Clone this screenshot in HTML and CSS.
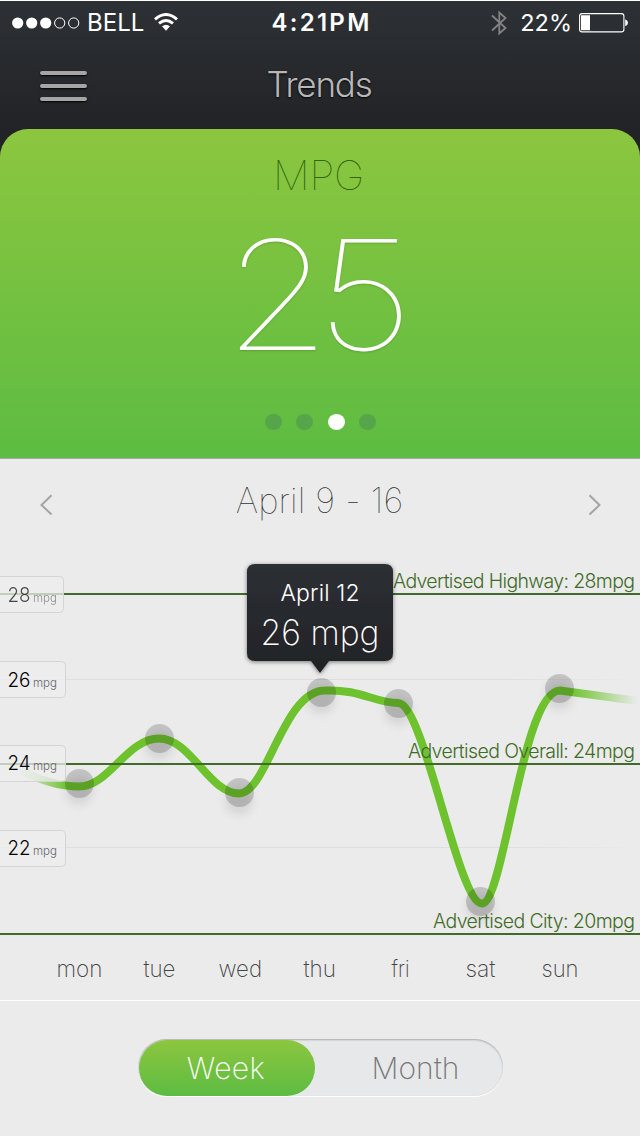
FILE: index.html
```html
<!DOCTYPE html>
<html lang="en">
<head>
<meta charset="utf-8">
<title>Trends</title>
<link rel="stylesheet" href="styles.css">
</head>
<body>
<div class="top">
  <div class="status">
    <div class="carrier">
      <svg class="signal" width="68" height="12" viewBox="0 0 68 12"><g fill="#fff"><circle cx="5.7" cy="6" r="5.6"/><circle cx="19.7" cy="6" r="5.6"/><circle cx="33.7" cy="6" r="5.6"/></g><g fill="none" stroke="#fff"><circle cx="47.7" cy="6" r="5.1"/><circle cx="61.7" cy="6" r="5.1"/></g></svg>
      <span class="bell">BELL</span>
      <svg class="wifi" width="24" height="18" viewBox="0 0 24 18"><g fill="none" stroke="#fff" stroke-width="2.9"><path d="M1 6.3Q12-3.3 23 6.3"/><path d="M5 10.4Q12 4.4 19 10.4"/></g><path d="M8 13.3Q12 10 16 13.3L12 17.8Z" fill="#fff"/></svg>
    </div>
    <span class="time">4:21PM</span>
    <div class="power">
      <svg width="16" height="26" viewBox="0 0 16 26"><path d="M1 5.5L14.5 18L8.3 23.5V2.5L14.5 8L1 20.5" fill="none" stroke="#818385" stroke-width="1.8"/></svg>
      <span class="percent">22%</span>
      <svg width="50" height="20" viewBox="0 0 50 20"><rect x=".6" y=".6" width="44.3" height="18.3" rx="2.5" fill="none" stroke="#fff" stroke-width="1.1"/><path d="M2 2.3h9v15H2zM46.2 6.3Q49 7.5 49 9.8T46.2 13.3Z" fill="#fff"/></svg>
    </div>
  </div>
  <div class="nav">
    <div class="menu"><i></i><i></i><i></i></div>
    <h1 class="title">Trends</h1>
  </div>
  <div class="card">
    <div class="card-label">MPG</div>
    <div class="card-value">25</div>
    <div class="dots"><i></i><i></i><i class="on"></i><i></i></div>
  </div>
</div>
<div class="range">
  <svg width="13" height="22" viewBox="0 0 13 22"><path d="M11.5 1.2L1.5 11L11.5 20.5" fill="none" stroke="#a4a4a4" stroke-width="2"/></svg>
  <span class="range-text">April 9 - 16</span>
  <svg width="13" height="22" viewBox="0 0 13 22"><path d="M1.5 1.2L11.5 11L1.5 20.5" fill="none" stroke="#a4a4a4" stroke-width="2"/></svg>
</div>
<svg class="chart" width="640" height="455" viewBox="0 545 640 455">
  <defs>
    <linearGradient id="curve" gradientUnits="userSpaceOnUse" x1="18" y1="0" x2="638" y2="0">
      <stop offset="0" stop-color="#6dc22e" stop-opacity="0"/><stop offset=".08" stop-color="#6dc22e"/><stop offset=".89" stop-color="#6dc22e"/><stop offset="1" stop-color="#6dc22e" stop-opacity="0"/>
    </linearGradient>
    <linearGradient id="grid" gradientUnits="userSpaceOnUse" x1="0" y1="0" x2="640" y2="0">
      <stop offset="0" stop-color="#dedede"/><stop offset=".8" stop-color="#dedede"/><stop offset="1" stop-color="#dedede" stop-opacity="0"/>
    </linearGradient>
    <linearGradient id="dark" x1="0" y1="0" x2="0" y2="1"><stop offset="0" stop-color="#2c3034"/><stop offset="1" stop-color="#222326"/></linearGradient>
    <filter id="soft" x="-50%" y="-50%" width="200%" height="200%"><feGaussianBlur stdDeviation="4"/></filter>
    <filter id="drop" x="-10%" y="-10%" width="120%" height="125%"><feDropShadow dx="0" dy="1" stdDeviation="2" flood-opacity=".5"/></filter>
  </defs>
  <g fill="url(#grid)"><rect y="679" width="640" height="1"/><rect y="847" width="640" height="1"/></g>
  <g filter="url(#soft)" fill-opacity=".09"><circle cx="79" cy="791" r="14"/><circle cx="159" cy="746" r="14"/><circle cx="239" cy="801" r="14"/><circle cx="321" cy="700" r="14"/><circle cx="398" cy="711" r="14"/><circle cx="480" cy="908" r="14"/><circle cx="559" cy="696" r="14"/></g>
  <path d="M18 769C35 778 58 786.5 79 786.5C109 786.5 127 738.5 159 738.5C191 738.5 209 793.5 239 793.5C267 793.5 283 690.5 325 690.5C360 689 375 703 398 703C424 703 458 903.5 482 903.5C504 903.5 522 690.5 560 690.5L638 701" fill="none" stroke="url(#curve)" stroke-width="8"/>
  <g fill-opacity=".17"><circle cx="79.5" cy="783.5" r="14.5"/><circle cx="159.5" cy="738.5" r="14.5"/><circle cx="239.5" cy="792.5" r="14.5"/><circle cx="321.5" cy="692.5" r="14.5"/><circle cx="398.5" cy="703.5" r="14.5"/><circle cx="480.5" cy="901.5" r="14.5"/><circle cx="559.5" cy="688.5" r="14.5"/></g>
  <g fill="#416b28"><rect y="593" width="640" height="2"/><rect y="763" width="640" height="2"/><rect y="933" width="640" height="2"/></g>
  <g class="ref"><text x="393" y="588" textLength="242">Advertised Highway: 28mpg</text><text x="408" y="758" textLength="227">Advertised Overall: 24mpg</text><text x="433" y="928" textLength="202">Advertised City: 20mpg</text></g>
  <g fill="#ededed" fill-opacity=".75" stroke="#d4d4d4"><rect x="-5" y="576.5" width="68.5" height="36" rx="4"/><rect x="-5" y="661.5" width="70.5" height="36" rx="4"/><rect x="-5" y="745.5" width="70.5" height="36" rx="4"/><rect x="-5" y="830.5" width="70.5" height="36" rx="4"/></g>
  <g class="tick"><text class="faded" x="7.5" y="602" textLength="23" lengthAdjust="spacingAndGlyphs">28</text><text x="7.5" y="687" textLength="23" lengthAdjust="spacingAndGlyphs">26</text><text x="7.5" y="770" textLength="23" lengthAdjust="spacingAndGlyphs">24</text><text x="7.5" y="855" textLength="23" lengthAdjust="spacingAndGlyphs">22</text></g>
  <g class="unit"><text class="faded" x="33" y="602" textLength="24" lengthAdjust="spacingAndGlyphs">mpg</text><text x="33" y="687" textLength="24" lengthAdjust="spacingAndGlyphs">mpg</text><text x="33" y="770" textLength="24" lengthAdjust="spacingAndGlyphs">mpg</text><text x="33" y="855" textLength="24" lengthAdjust="spacingAndGlyphs">mpg</text></g>
  <path d="M255 564H385Q393 564 393 572V653Q393 661 385 661H329L320 673L311 661H255Q247 661 247 653V572Q247 564 255 564Z" fill="url(#dark)" filter="url(#drop)"/>
  <text class="tip-date" x="280.5" y="601" textLength="79">April 12</text>
  <text class="tip-value" x="260.5" y="645" textLength="119" lengthAdjust="spacingAndGlyphs">26 mpg</text>
  <g class="days"><text x="56.5" y="977" textLength="46" lengthAdjust="spacingAndGlyphs">mon</text><text x="143.5" y="977" textLength="32" lengthAdjust="spacingAndGlyphs">tue</text><text x="218.5" y="977" textLength="43.5" lengthAdjust="spacingAndGlyphs">wed</text><text x="303.5" y="977" textLength="32.5" lengthAdjust="spacingAndGlyphs">thu</text><text x="391.5" y="977" textLength="18" lengthAdjust="spacingAndGlyphs">fri</text><text x="465.5" y="977" textLength="30" lengthAdjust="spacingAndGlyphs">sat</text><text x="541.5" y="977" textLength="37" lengthAdjust="spacingAndGlyphs">sun</text></g>
</svg>
<div class="footer">
  <div class="segmented"><span class="seg active">Week</span><span class="seg month">Month</span></div>
</div>
</body>
</html>
```

FILE: styles.css
```css
* { box-sizing: border-box; }
body { margin: 0; width: 640px; height: 1136px; overflow: hidden; background: #ebebeb; font-family: Inter, "Liberation Sans", sans-serif; display: flex; flex-direction: column; }
svg { display: block; flex: none; }
.chart { overflow: visible; }
.top { height: 459px; border-top: 1px solid #fff; background: linear-gradient(#2d3135, #222326 128px); display: flex; flex-direction: column; border-bottom: 1px solid #aaa; flex: none; }
.status { height: 43px; padding: 0 11px 0 12px; display: grid; grid-template-columns: 1fr auto 1fr; align-items: center; color: #fff; line-height: 43px; }
.carrier { display: flex; align-items: center; }
.bell { font-size: 24px; margin: 0 10px 0 7px; }
.wifi { margin-bottom: 2px; }
.time { font-size: 24px; font-weight: 600; letter-spacing: 2.3px; margin-left: 2px; }
.power { display: flex; align-items: center; justify-content: flex-end; }
.percent { font-size: 23.5px; margin: 0 7px 0 13px; }
.nav { height: 85px; position: relative; display: flex; justify-content: center; }
.menu { position: absolute; left: 40px; top: 27px; display: flex; flex-direction: column; gap: 9px; }
.menu i { width: 47px; height: 4px; border-radius: 2px; background: #a6a5a6; box-shadow: 0 1px 2px #000; }
.title { margin: 0 2px 0 0; font-size: 35px; font-weight: 300; line-height: 81px; color: #b7b7b7; text-shadow: 0 1px 2px #000; letter-spacing: -1.2px; }
.card { flex: 1; border-radius: 28px 28px 0 0; background: linear-gradient(#8cc63f, #5dbc42); display: flex; flex-direction: column; align-items: center; }
.card-label { font-size: 41px; font-weight: 100; line-height: 50px; margin-top: 21px; margin-right: 3px; color: #34640c; letter-spacing: -.3px; }
.card-value { font-size: 152px; font-weight: 100; line-height: 184px; margin-top: 3px; margin-right: 17px; color: #fff; text-shadow: 0 1px 2px rgba(0,0,0,.15); letter-spacing: -12.5px; transform: scaleX(1.13); }
.dots { display: flex; gap: 14.5px; margin-top: 27px; margin-left: 1px; }
.dots i { width: 17px; height: 16px; border-radius: 50%; background: #57a54b; }
.dots .on { background: #fff; }
.range { height: 86px; flex: none; padding: 5px 39px 0 40px; display: flex; justify-content: space-between; align-items: flex-start; }
.range svg { margin-top: 30px; }
.range-text { font-size: 35px; font-weight: 100; line-height: 72px; color: #333; white-space: pre; letter-spacing: .1px; margin-right: 2px; }
.ref { font-size: 19.5px; font-weight: 300; fill: #416b28; }
.tick { font-size: 19.5px; font-weight: 300; fill: #000; }
.unit { font-size: 12.5px; font-weight: 300; fill: #666; }
.faded { opacity: .7; }
.tip-date { font-size: 23px; font-weight: 300; fill: #fff; }
.tip-value { font-size: 35px; font-weight: 200; fill: #fff; }
.days { font-size: 23px; font-weight: 200; fill: #444; }
.footer { flex: 1; border-top: 1px solid #fff; padding-top: 38px; display: flex; justify-content: center; align-items: flex-start; }
.segmented { width: 365px; height: 57px; border-radius: 29px; background: #e6e8ea; display: flex; padding: 1px 1px 0; box-shadow: inset 0 1px 2px #aaa, 0 1px 0 #fff; margin-left: 1px; }
.seg { font-size: 30px; font-weight: 200; line-height: 56px; text-align: center; }
.active { width: 176px; height: 56px; border-radius: 28px; background: linear-gradient(#8cc63f, #5dbc42); color: #fff; letter-spacing: .4px; padding-right: 2px; }
.month { flex: 1; color: #777; padding-left: 14px; letter-spacing: 0; }
```
